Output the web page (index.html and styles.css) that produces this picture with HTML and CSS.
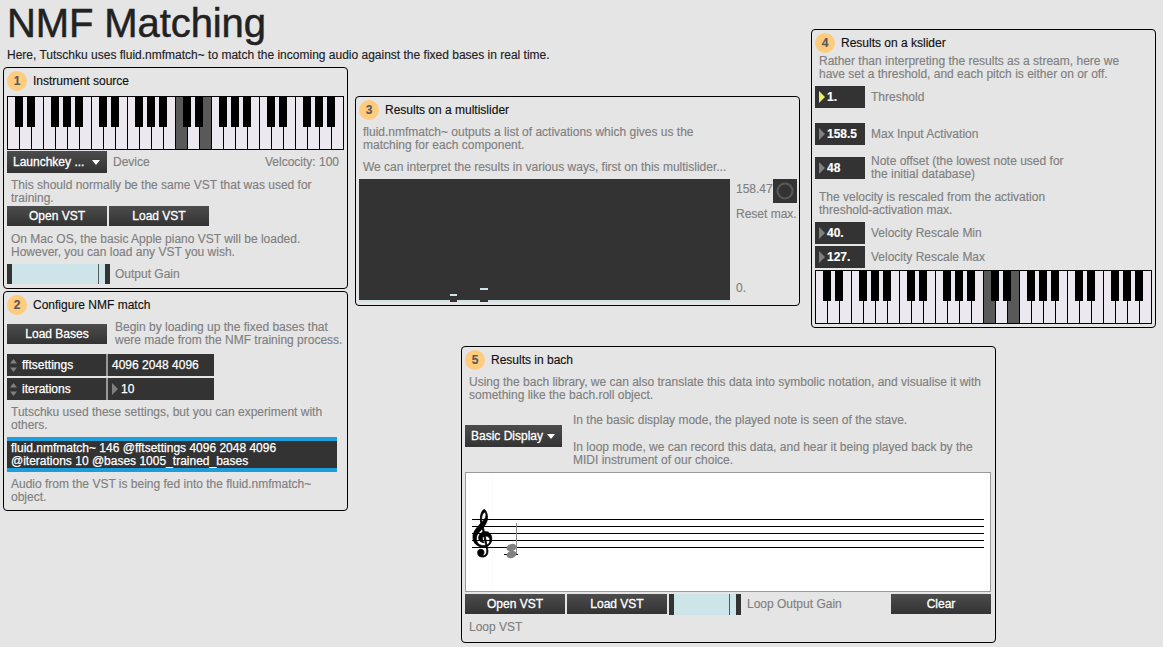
FILE: index.html
```html
<!DOCTYPE html>
<html lang="en">
<head>
<meta charset="utf-8">
<title>NMF Matching</title>
<link rel="stylesheet" href="styles.css">
</head>
<body>
<svg class="defs" width="0" height="0" aria-hidden="true">
  <defs>
    <pattern id="white" width="12" height="54" patternUnits="userSpaceOnUse">
      <rect width="12" height="54" fill="#ebe9ef"/><rect width="1" height="54"/>
    </pattern>
    <pattern id="black" width="84" height="54" patternUnits="userSpaceOnUse">
      <path d="M8 0h8v31h-8zM20 0h8v31h-8zM44 0h8v31h-8zM56 0h8v31h-8zM68 0h8v31h-8z"/>
    </pattern>
    <g id="keyboard" shape-rendering="crispEdges">
      <rect width="337" height="54" fill="url(#white)"/>
      <path d="M169 0h11v54h-11zM193 0h11v54h-11z" fill="#595959"/>
      <rect width="336" height="54" fill="url(#black)"/>
      <path d="M0 0h337v1H0zM0 53h337v1H0z"/>
    </g>
  </defs>
</svg>
<main class="patch">
  <div class="left">
    <h1>NMF Matching</h1>
    <p class="intro">Here, Tutschku uses fluid.nmfmatch~ to match the incoming audio against the fixed bases in real time.</p>

    <section class="panel source">
      <h2><span class="badge">1</span>Instrument source</h2>
      <svg class="keys" width="337" height="54"><use href="#keyboard"/></svg>
      <div class="row device">
        <span class="select">Launchkey ...<i class="caret"></i></span>
        <span>Device</span><span class="velocity">Velcocity: 100</span>
      </div>
      <p class="note mt6">This should normally be the same VST that was used for<br>training.</p>
      <div class="row buttons"><span class="btn">Open VST</span><span class="btn">Load VST</span></div>
      <p class="note mt7">On Mac OS, the basic Apple piano VST will be loaded.<br>However, you can load any VST you wish.</p>
      <div class="row gain"><span class="slider"></span><span>Output Gain</span></div>
    </section>

    <section class="panel configure">
      <h2><span class="badge">2</span>Configure NMF match</h2>
      <div class="row load"><span class="btn">Load Bases</span><p>Begin by loading up the fixed bases that<br>were made from the NMF training process.</p></div>
      <div class="attrs">
        <div class="attr"><span class="name"><svg width="7" height="13"><path d="M3.500 0L7 4.500H0zM0 8.500h7L3.500 13z"/></svg>fftsettings</span><span class="value">4096 2048 4096</span></div>
        <div class="attr"><span class="name"><svg width="7" height="13"><path d="M3.500 0L7 4.500H0zM0 8.500h7L3.500 13z"/></svg>iterations</span><span class="value"><i class="tri"></i>10</span></div>
      </div>
      <p class="note mt6">Tutschku used these settings, but you can experiment with<br>others.</p>
      <div class="object">fluid.nmfmatch~ 146 @fftsettings 4096 2048 4096<br>@iterations 10 @bases 1005_trained_bases</div>
      <p class="note mt6">Audio from the VST is being fed into the fluid.nmfmatch~<br>object.</p>
    </section>
  </div>

  <div class="right">
    <div class="top">
      <section class="panel multi">
        <h2><span class="badge">3</span>Results on a multislider</h2>
        <p class="note mt6">fluid.nmfmatch~ outputs a list of activations which gives us the<br>matching for each component.</p>
        <p class="note mt9">We can interpret the results in various ways, first on this multislider...</p>
        <div class="plot">
          <svg width="371" height="123" shape-rendering="crispEdges">
            <rect width="371" height="121" fill="#333"/>
            <path d="M91 121h7v2h-7zM121 121h8v2h-8z" fill="#333"/>
            <path d="M0 121h91v2H0zM98 121h23v2H98zM129 121h242v2H129zM91 115h7v2h-7zM121 109h8v2h-8z" fill="#cde5e9"/>
          </svg>
          <div class="scale">
            <div class="max"><span>158.47</span><svg width="24" height="24"><rect width="24" height="24" fill="#333"/><circle cx="12" cy="12" r="7.500" fill="none" stroke="#595959" stroke-width="2"/></svg></div>
            <span class="reset">Reset max.</span>
            <span class="min">0.</span>
          </div>
        </div>
      </section>

      <section class="panel kslider">
        <h2><span class="badge">4</span>Results on a kslider</h2>
        <p class="note mt2">Rather than interpreting the results as a stream, here we<br>have set a threshold, and each pitch is either on or off.</p>
        <div class="row param mt5"><span class="num"><i class="tri lit"></i>1.</span><span>Threshold</span></div>
        <div class="row param mt15"><span class="num"><i class="tri"></i>158.5</span><span>Max Input Activation</span></div>
        <div class="row param mt12"><span class="num"><i class="tri"></i>48</span><p>Note offset (the lowest note used for<br>the initial database)</p></div>
        <p class="note mt12">The velocity is rescaled from the activation<br>threshold-activation max.</p>
        <div class="row param mt5"><span class="num"><i class="tri"></i>40.</span><span>Velocity Rescale Min</span></div>
        <div class="row param mt2"><span class="num"><i class="tri"></i>127.</span><span>Velocity Rescale Max</span></div>
        <svg class="keys" width="337" height="54"><use href="#keyboard"/></svg>
      </section>
    </div>

    <section class="panel bach">
      <h2><span class="badge">5</span>Results in bach</h2>
      <p class="note mt6">Using the bach library, we can also translate this data into symbolic notation, and visualise it with<br>something like the bach.roll object.</p>
      <div class="modes">
        <span class="select">Basic Display<i class="caret"></i></span>
        <div>
          <p>In the basic display mode, the played note is seen of the stave.</p>
          <p class="loop">In loop mode, we can record this data, and hear it being played back by the<br>MIDI instrument of our choice.</p>
        </div>
      </div>
      <svg class="roll" width="526" height="120">
        <rect x=".5" y=".5" width="525" height="119" fill="#fff" stroke="#999"/>
        <path d="M27.500 1v118" stroke="#fafafa"/>
        <path d="M7 47.500h512M7 54.500h512M7 61.500h512M7 68.500h512M7 75.500h512M39 82.500h14" stroke="#000"/>
        <g transform="translate(-10 18) scale(.33333)">
          <path stroke="#000" stroke-width="2.500" stroke-linejoin="round" d="M87 58C95 62 100 78 96 93C92 107 80 117 74 125C67 132 63 139 64 148C65 160 74 167 87 167C99 167 105 160 105 151C105 142 99 138 92 138C85 138 82 141 82 146C82 152 84 155 88 158C77 158 70 150 71 142C72 131 82 125 92 125C104 125 110 134 110 147C110 161 101 171 86 171C67 171 55 160 54 143C53 128 62 117 72 106C82 96 93 86 93 75C93 70 91 67 88 67C83 70 80 77 80 85C80 94 84 107 87 120L98 176C101 192 95 201 83 201C73 201 68 196 68 188C68 181 72 178 77 178C83 178 87 182 87 187C87 192 84 195 81 197C90 199 97 192 95 178L83 122C80 109 76 99 76 88C76 73 80 63 87 58Z"/>
        </g>
        <path d="M51.500 51v31" stroke="#8a8a8a"/>
        <g fill="#808080"><ellipse cx="46.500" cy="75.600" rx="5" ry="3.600" transform="rotate(-18 46.500 75.600)"/><ellipse cx="46.500" cy="82.500" rx="5" ry="3.600" transform="rotate(-18 46.500 82.500)"/></g>
      </svg>
      <div class="row controls">
        <span class="btn">Open VST</span><span class="btn">Load VST</span><span class="slider short"></span><span class="label">Loop Output Gain</span><span class="btn clear">Clear</span>
      </div>
      <p class="note mt6">Loop VST</p>
    </section>
  </div>
</main>
</body>
</html>
```
FILE: styles.css
```css
* { box-sizing: border-box; }
body {
  margin: 0;
  width: 1163px;
  height: 647px;
  overflow: hidden;
  background: #e5e5e5;
  color: #808080;
  font: 12px/13px "Liberation Sans", Arial, sans-serif;
  white-space: nowrap;
  -webkit-text-stroke: .15px;
}
h1, h2, p { margin: 0; font-weight: normal; }
svg { display: block; flex: none; }
i { display: block; flex: none; }
.defs { position: absolute; }
.patch { display: flex; padding-left: 3px; }
.left { width: 345px; flex: none; }
.right { width: 801px; margin-left: 7px; padding-top: 29px; }
.top { display: flex; justify-content: space-between; align-items: flex-start; }
h1 { height: 49px; padding-left: 4px; font-size: 40px; line-height: 46px; letter-spacing: -.1px; color: #222; -webkit-text-stroke: .5px; }
.intro { padding-left: 4px; color: #222; height: 18px; }

.panel { border: 1px solid #000; border-radius: 4px; padding: 3px; }
.source { height: 222px; }
.configure { height: 220px; margin-top: 2px; }
.multi { width: 445px; height: 210px; margin-top: 67px; }
.kslider { width: 345px; height: 299px; }
.bach { width: 535px; height: 297px; margin: 18px 0 0 106px; }

h2 { display: flex; align-items: center; gap: 6px; height: 20px; font-size: 12px; color: #111; }
.badge {
  width: 20px; height: 20px; border-radius: 50%;
  background: #ffcb7d; color: #595959;
  font-weight: bold; line-height: 20px; text-align: center;
}
.note { padding-left: 4px; }
.mt2 { margin-top: 2px; }
.mt5 { margin-top: 5px; }
.mt6 { margin-top: 6px; }
.mt7 { margin-top: 7px; }
.mt9 { margin-top: 9px; }
.mt12 { margin-top: 12px; }
.mt15 { margin-top: 15px; }

.row { display: flex; align-items: center; }
.source .keys { margin-top: 5px; }
.kslider .keys { margin-top: 2px; }
.device { margin-top: 1px; height: 22px; gap: 6px; padding-right: 5px; }
.velocity { margin-left: auto; }
.buttons { margin-top: 1px; gap: 2px; }
.gain { margin-top: 5px; gap: 5px; }
.load { margin-top: 9px; height: 20px; gap: 8px; }
.btn, .select {
  flex: none;
  background: linear-gradient(#4c4c4c, #333);
  color: #fff;
  -webkit-text-stroke: .3px #fff;
}
.btn { width: 100px; height: 20px; line-height: 20px; text-align: center; }
.select {
  display: flex; align-items: center; justify-content: space-between;
  width: 100px; height: 22px; padding: 0 7px 0 6px;
}
.caret { border: 4px solid transparent; border-top: 5px solid #fff; border-bottom: 0; }
.slider {
  flex: none; width: 103px; height: 20px;
  border: solid #333; border-width: 0 5px;
  background: linear-gradient(#595959, #595959) 86px 0 / 1px 100% no-repeat #cde5e9;
}
.slider.short { width: 72px; height: 21px; background-position: 55px 0; }

.attrs { display: grid; gap: 2px; margin-top: 10px; }
.attr { display: flex; width: 207px; height: 22px; background: #333; color: #fff; -webkit-text-stroke: .25px #fff; }
.name, .value { display: flex; align-items: center; }
.name { width: 101px; padding-left: 3px; gap: 5px; border-right: 2px solid #999; }
.name svg { fill: #808080; }
.value { padding-left: 4px; }
.tri { border: 6px solid transparent; border-left: 6px solid #808080; border-right: 0; }
.value .tri { margin-right: 3px; }
.lit { border-left-color: #eeee66; }
.object {
  margin-top: 5px; width: 330px; height: 35px; padding: 1px 4px 0;
  border: solid #1a9edc; border-width: 4px 0;
  background: #333; color: #fff; -webkit-text-stroke: .25px #fff;
}

.plot { display: flex; gap: 6px; margin-top: 5px; }
.scale { width: 61px; }
.max { display: flex; justify-content: space-between; }
.max span { padding-top: 4px; }
.reset, .min { display: block; }
.reset { margin-top: 5px; }
.min { margin-top: 61px; }

.param { height: 22px; gap: 6px; }
.num {
  flex: none; display: flex; align-items: center; gap: 2px;
  width: 50px; height: 22px; padding-left: 4px;
  background: #333; color: #fff; font-weight: bold;
}

.modes { display: flex; gap: 11px; margin-top: 12px; }
.modes .select { width: 97px; margin-top: 11px; }
.loop { margin-top: 14px; }
.roll { margin-top: 5px; }
.controls { margin-top: 2px; height: 21px; gap: 2px; align-items: flex-start; }
.label { padding: 4px 0 0 4px; }
.clear { margin-left: auto; }
.bach > .row { padding-right: 1px; }
```
